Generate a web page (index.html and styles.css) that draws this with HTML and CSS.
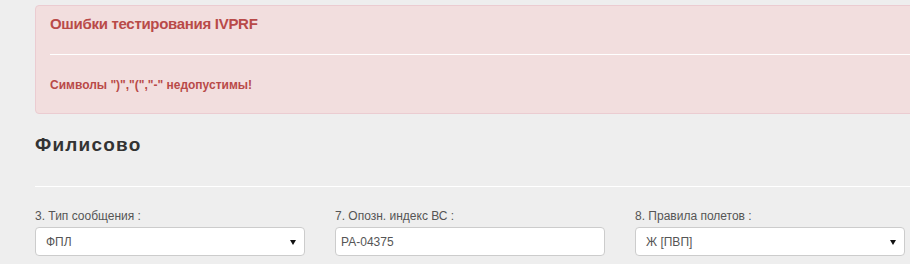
FILE: index.html
```html
<!DOCTYPE html>
<html lang="ru">
<head>
<meta charset="utf-8">
<title>Филисово</title>
<link rel="stylesheet" href="styles.css">
</head>
<body>
<div class="page">
  <div class="alert">
    <h4 class="alert-title">Ошибки тестирования IVPRF</h4>
    <hr class="alert-rule">
    <p class="alert-msg">Символы ")","(","-" недопустимы!</p>
  </div>
  <h2 class="heading">Филисово</h2>
  <hr class="rule">
  <div class="form-row">
    <div class="field">
      <label class="label">3. Тип сообщения :</label>
      <div class="select">
        <span class="select-value">ФПЛ</span>
        <svg class="caret" width="6" height="5" viewBox="0 0 6 5"><path d="M0 0H6L3 5Z" fill="#111"/></svg>
      </div>
    </div>
    <div class="field">
      <label class="label">7. Опозн. индекс ВС :</label>
      <input class="input" type="text" value="РА-04375">
    </div>
    <div class="field">
      <label class="label">8. Правила полетов :</label>
      <div class="select">
        <span class="select-value">Ж [ПВП]</span>
        <svg class="caret" width="6" height="5" viewBox="0 0 6 5"><path d="M0 0H6L3 5Z" fill="#111"/></svg>
      </div>
    </div>
  </div>
</div>
</body>
</html>
```

FILE: styles.css
```css
html, body {
  margin: 0;
  padding: 0;
  background: #eeeeee;
  overflow: hidden;
}
body {
  font-family: "Liberation Sans", Arial, sans-serif;
  color: #333;
}
.page {
  padding: 5px 0 0 35px;
  width: 960px;
}
.alert {
  background: #f2dede;
  border: 1px solid #ebccd1;
  border-radius: 4px;
  padding: 8px 15px 19px 14px;
  color: #b94a48;
}
.alert-title {
  margin: 0;
  font-size: 15px;
  line-height: 20px;
  font-weight: bold;
  letter-spacing: -0.3px;
}
.alert-rule {
  margin: 20px 0 0 0;
  border: 0;
  border-top: 1px solid #ffffff;
  height: 0;
}
.alert-msg {
  margin: 21px 0 0 0;
  font-size: 12px;
  line-height: 18px;
  font-weight: bold;
}
.heading {
  margin: 21px 0 0 0;
  font-size: 19px;
  line-height: 20px;
  font-weight: bold;
  letter-spacing: 1.2px;
  color: #333;
}
.rule {
  margin: 31px 0 0 0;
  border: 0;
  border-top: 1px solid #ffffff;
  height: 0;
}
.form-row {
  display: grid;
  grid-template-columns: 270px 270px 270px;
  column-gap: 30px;
  margin-top: 21px;
}
.field {
  display: flex;
  flex-direction: column;
}
.label {
  font-size: 12px;
  line-height: 17px;
  color: #555;
  margin-bottom: 2px;
}
.select, .input {
  box-sizing: border-box;
  height: 29px;
  background: #fff;
  border: 1px solid #cccccc;
  border-radius: 4px;
  font-family: "Liberation Sans", Arial, sans-serif;
  font-size: 12px;
  color: #555;
}
.select {
  position: relative;
  display: flex;
  align-items: center;
  padding-left: 10px;
}
.caret {
  position: absolute;
  right: 8px;
  top: 12px;
}
.input {
  width: 100%;
  padding: 0 5px;
  outline: none;
}
```
